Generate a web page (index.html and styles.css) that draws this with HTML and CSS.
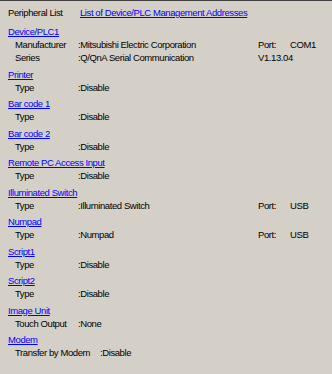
FILE: index.html
```html
<!DOCTYPE html>
<html lang="en">
<head>
    <meta charset="UTF-8">
    <title>Peripheral List</title>
    <link rel="stylesheet" href="styles.css">
</head>
<body>
    <div class="panel">
        <!-- Title row -->
        <div class="title-row">
            <span class="title">Peripheral List</span>
            <a href="#">List of Device/PLC Management Addresses</a>
        </div>

        <div class="section first">
            <a href="#">Device/PLC1</a>
            <div class="row">
                <span class="label">Manufacturer</span>
                <span class="value">:Mitsubishi Electric Corporation</span>
                <span class="port">Port:</span>
                <span>COM1</span>
            </div>
            <div class="row">
                <span class="label">Series</span>
                <span class="value">:Q/QnA Serial Communication</span>
                <span>V1.13.04</span>
            </div>
        </div>

        <div class="section">
            <a href="#">Printer</a>
            <div class="row"><span class="label">Type</span><span class="value">:Disable</span></div>
        </div>

        <div class="section">
            <a href="#">Bar code 1</a>
            <div class="row"><span class="label">Type</span><span class="value">:Disable</span></div>
        </div>

        <div class="section">
            <a href="#">Bar code 2</a>
            <div class="row"><span class="label">Type</span><span class="value">:Disable</span></div>
        </div>

        <div class="section">
            <a href="#">Remote PC Access Input</a>
            <div class="row"><span class="label">Type</span><span class="value">:Disable</span></div>
        </div>

        <div class="section">
            <a href="#">Illuminated Switch</a>
            <div class="row">
                <span class="label">Type</span>
                <span class="value">:Illuminated Switch</span>
                <span class="port">Port:</span>
                <span>USB</span>
            </div>
        </div>

        <div class="section">
            <a href="#">Numpad</a>
            <div class="row">
                <span class="label">Type</span>
                <span class="value">:Numpad</span>
                <span class="port">Port:</span>
                <span>USB</span>
            </div>
        </div>

        <div class="section">
            <a href="#">Script1</a>
            <div class="row"><span class="label">Type</span><span class="value">:Disable</span></div>
        </div>

        <div class="section">
            <a href="#">Script2</a>
            <div class="row"><span class="label">Type</span><span class="value">:Disable</span></div>
        </div>

        <div class="section">
            <a href="#">Image Unit</a>
            <div class="row"><span class="label">Touch Output</span><span class="value">:None</span></div>
        </div>

        <div class="section">
            <a href="#">Modem</a>
            <div class="row wide"><span class="label">Transfer by Modem</span><span class="value">:Disable</span></div>
        </div>
    </div>
</body>
</html>
```

FILE: styles.css
```css
body {
    margin: 0;
    padding: 0;
    background-color: #d4d0c8;
    font-family: "Liberation Sans", Arial, sans-serif;
    font-size: 9.5px;
    letter-spacing: -0.41px;
    color: #000;
}

.panel {
    height: 373px;
    border-top: 1px solid #404040;
    padding: 5px 0 0 8px;
    line-height: 13px;
}

a {
    color: #0000ff;
    text-decoration: underline;
}

.title-row {
    display: flex;
}

.title {
    width: 72px;
}

.section {
    display: flex;
    flex-direction: column;
    align-items: flex-start;
    margin-top: 3.5px;
}

.section.first {
    margin-top: 6px;
}

.row {
    display: flex;
    padding-left: 7px;
    white-space: nowrap;
}

.label {
    width: 63px;
}

.row.wide .label {
    width: 85px;
}

.value {
    width: 180px;
}

.port {
    width: 32px;
}
```
